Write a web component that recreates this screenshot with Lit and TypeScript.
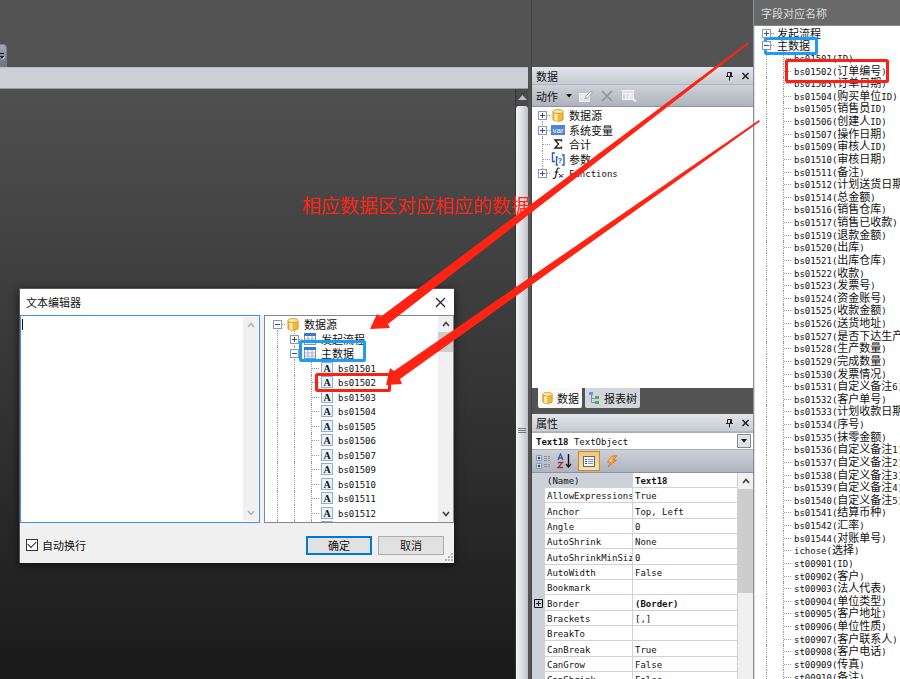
import { LitElement, html, svg, css } from "lit";
import { customElement, property } from "lit/decorators.js";

type Cell = "line" | "tee" | "plus" | "minus" | "pluslast" | "minusfirst" | "plusfirst";
type IconName = "db" | "var" | "sum" | "param" | "fx" | "table" | "field";
interface TreeRow {
  cells: Cell[];
  icon?: IconName;
  text: string;
}

const dbShape = svg`
  <path d="M2 3.500v8c0 2.200 10 2.200 10 0v-8z" fill="#f6b92c" stroke="#d0962a"/>
  <path d="M3.500 4.500v7.500c1 .8 2 .9 3 1V5z" fill="#fff1b8"/>
  <ellipse cx="7" cy="3.500" rx="5" ry="2" fill="#fde9a5" stroke="#d9a238"/>`;

const icons: Record<IconName, unknown> = {
  db: dbShape,
  var: svg`<rect x="0" y="2" width="14" height="10" fill="#4d86d3"/>
    <text x="7" y="10" text-anchor="middle" font-family="Liberation Sans" font-size="8" fill="#fff">var</text>`,
  sum: svg`<path d="M10.500 4.500V3H4L7.500 7L4 11H10.500V9.500" fill="none" stroke="#222" stroke-width="1.400"/>`,
  param: svg`<path d="M4 1H1.500V9.500H4M7 5H5.500V13H7M11 3H13V13H11" fill="none" stroke="#2b5fb5" stroke-width="1.400"/>
    <text x="9" y="11" text-anchor="middle" font-family="Liberation Sans" font-weight="bold" font-size="8" fill="#2b5fb5">?</text>`,
  fx: svg`<path d="M8.500 2.500C6.500 1 6 3 5.600 5.500L4.800 10C4.500 12.500 3 13 2 12M3.500 6H7.500" fill="none" stroke="#222" stroke-width="1.200"/>
    <path d="M8 8.500C10 7.500 9.500 12 12 11M12.500 8.500C11 8 10 11.500 8 11" fill="none" stroke="#222"/>`,
  table: svg`<rect x="1.500" y="1.500" width="11" height="11" fill="#fff" stroke="#7d95b5"/>
    <rect x="1" y="1" width="12" height="3" fill="#3c78c8"/>
    <path d="M5 4V12M9 4V12M2 7H12M2 10H12" stroke="#9fb0c8"/>`,
  field: svg`<rect x="1.500" y="1.500" width="11" height="11" fill="#eaf2fb" stroke="#8fafd4"/>
    <text x="7" y="11" text-anchor="middle" font-family="Liberation Serif" font-weight="bold" font-size="10" fill="#111">A</text>`,
};

/** Wraps runs of Latin text so that they keep half the width of a Han character. */
const mixed = (text: string) =>
  text.split(/([\x20-\x7e]+)/).filter(Boolean).map((part) =>
    /^[\x20-\x7e]/.test(part) ? html`<span class="latin">${part}</span>` : part);

const chevron = (down: boolean) => html`<svg class="chevron" width="8" height="6" viewBox="0 0 8 6">
  <path d=${down ? "M1 1L4 4.500L7 1" : "M1 5L4 1.500L7 5"} fill="none" stroke="currentColor" stroke-width="1.700"/></svg>`;

const shared = css`
  * { box-sizing: border-box; }
  .latin { font-family: "DejaVu Sans Mono", monospace; font-size: 9px; white-space: pre; }
  .chevron { display: block; }
`;

@customElement("tree-view")
export class TreeView extends LitElement {
  @property({ attribute: false }) rows: TreeRow[] = [];
  @property({ reflect: true }) density = "normal";

  static styles = [shared, css`
    :host { display: block; overflow: hidden; }
    ul { list-style: none; margin: 0; padding: 0 0 0 4px; }
    li { display: flex; align-items: center; height: 14px; white-space: nowrap; }
    li:nth-child(even) { height: 15px; }
    :host([density="compact"]) li { height: 13px; }
    :host([density="compact"]) li:nth-child(8n + 2),
    :host([density="compact"]) li:nth-child(8n + 5),
    :host([density="compact"]) li:nth-child(8n + 7) { height: 12px; }
    .cell { flex: none; position: relative; width: 17px; height: 100%; }
    .cell::before { content: ""; position: absolute; left: 8px; top: 0; bottom: 0; border-left: 1px dotted #999; }
    .cell::after { content: ""; position: absolute; left: 9px; right: 1px; top: 50%; border-top: 1px dotted #999; }
    .line::after { display: none; }
    .pluslast::before { bottom: 50%; }
    .minusfirst::before, .plusfirst::before { top: 50%; }
    .box { position: absolute; z-index: 1; left: 4px; top: calc(50% - 4px); width: 9px; height: 9px; display: block; }
    .icon { flex: none; width: 14px; height: 14px; margin: 0 2px 0 0; }
    .label { padding-left: 2px; line-height: 12px; }
  `];

  render() {
    return html`<ul>${this.rows.map((row) => html`<li>
      ${row.cells.map((c) => html`<span class="cell ${c}">${/plus|minus/.test(c)
        ? html`<svg class="box" viewBox="0 0 9 9"><rect x=".5" y=".5" width="8" height="8" fill="#fff" stroke="#8e99a8"/>
            <path d=${c.startsWith("plus") ? "M2 4.500H7M4.500 2V7" : "M2 4.500H7"} stroke="#2c4fa0"/></svg>`
        : ""}</span>`)}
      ${row.icon ? html`<svg class="icon" viewBox="0 0 14 14">${icons[row.icon]}</svg>` : ""}
      <span class="label">${mixed(row.text)}</span></li>`)}</ul>`;
  }
}

const dataRows: TreeRow[] = [
  { cells: ["plusfirst"], icon: "db", text: "数据源" },
  { cells: ["plus"], icon: "var", text: "系统变量" },
  { cells: ["tee"], icon: "sum", text: "合计" },
  { cells: ["tee"], icon: "param", text: "参数" },
  { cells: ["pluslast"], icon: "fx", text: "Functions" },
];

const editorRows: TreeRow[] = [
  { cells: ["minusfirst"], icon: "db", text: "数据源" },
  { cells: ["line", "plus"], icon: "table", text: "发起流程" },
  { cells: ["line", "minus"], icon: "table", text: "主数据" },
  ...["01", "02", "03", "04", "05", "06", "07", "09", "10", "11", "12"].map(
    (n): TreeRow => ({ cells: ["line", "line", "tee"], icon: "field", text: `bs015${n}` })),
  { cells: ["line", "line", "tee"], icon: "field", text: "" },
];

const fields = `bs01501(ID)
bs01502(订单编号)
bs01503(订单日期)
bs01504(购买单位ID)
bs01505(销售员ID)
bs01506(创建人ID)
bs01507(操作日期)
bs01509(审核人ID)
bs01510(审核日期)
bs01511(备注)
bs01512(计划送货日期)
bs01514(总金额)
bs01516(销售仓库)
bs01517(销售已收款)
bs01519(退款金额)
bs01520(出库)
bs01521(出库仓库)
bs01522(收款)
bs01523(发票号)
bs01524(资金账号)
bs01525(收款金额)
bs01526(送货地址)
bs01527(是否下达生产)
bs01528(生产数量)
bs01529(完成数量)
bs01530(发票情况)
bs01531(自定义备注6)
bs01532(客户单号)
bs01533(计划收款日期)
bs01534(序号)
bs01535(抹零金额)
bs01536(自定义备注1)
bs01537(自定义备注2)
bs01538(自定义备注3)
bs01539(自定义备注4)
bs01540(自定义备注5)
bs01541(结算币种)
bs01542(汇率)
bs01544(对账单号)
ichose(选择)
st00901(ID)
st00902(客户)
st00903(法人代表)
st00904(单位类型)
st00905(客户地址)
st00906(单位性质)
st00907(客户联系人)
st00908(客户电话)
st00909(传真)
st00910(备注)`.split("\n");

const fieldRows: TreeRow[] = [
  { cells: ["plusfirst"], text: "发起流程" },
  { cells: ["minus"], text: "主数据" },
  ...fields.map((text): TreeRow => ({ cells: ["line", "tee"], text })),
];

const properties: [string, string][] = [
  ["(Name)", "Text18"], ["AllowExpressions", "True"], ["Anchor", "Top, Left"], ["Angle", "0"],
  ["AutoShrink", "None"], ["AutoShrinkMinSize", "0"], ["AutoWidth", "False"], ["Bookmark", ""],
  ["Border", "(Border)"], ["Brackets", "[,]"], ["BreakTo", ""], ["CanBreak", "True"],
  ["CanGrow", "False"], ["CanShrink", "False"],
];

const panelTitle = (title: string) => html`<header class="panel-title"><h2>${title}</h2>
  <button class="bare" aria-label="固定"><svg width="9" height="10" viewBox="0 0 9 10"><path d="M2.500 5.500V1.500H6.500V5.500M1 5.500H8M4.500 6V9.500M5.500 1.500V5.500" fill="none" stroke="#222"/></svg></button>
  <button class="bare" aria-label="关闭"><svg width="9" height="8" viewBox="0 0 9 8"><path d="M1.500 1L7.500 7M7.500 1L1.500 7" stroke="#222" stroke-width="1.500"/></svg></button></header>`;

@customElement("app-root")
export class AppRoot extends LitElement {
  static styles = [shared, css`
    :host {
      display: grid; grid-template-columns: minmax(0, 1fr) 223px 146px; grid-template-rows: 100%;
      position: relative; height: 100vh; overflow: hidden; background: #535353; color: #111;
      font: 11px/14px "Noto Sans CJK SC", sans-serif;
    }
    h1, h2 { margin: 0; font-size: 11px; font-weight: 400; }
    button { font: inherit; color: inherit; padding: 0; margin: 0; border: 0; }
    .bare { background: none; display: flex; align-items: center; justify-content: center; }

    .workspace { display: flex; flex-direction: column; min-width: 0; padding-right: 3px; }
    .top { height: 67px; display: flex; align-items: flex-end; }
    .stub { width: 7px; height: 23px; border: 1px solid #777b84; border-left: 0; border-radius: 0 4px 0 0; background: linear-gradient(#a5a9b3, #6b7280); display: flex; align-items: center; }
    .band { height: 22px; background: #cdcfd4; border-top: 1px solid #bbb; border-bottom: 1px solid #999; }
    .canvas { flex: 1; display: flex; justify-content: flex-end; background: linear-gradient(#505050, #1a1a1a); }
    .vscroll { width: 13px; display: flex; flex-direction: column; background: #4a4a4a; border-left: 1px solid #333; }
    .vscroll .up { height: 17px; color: #bbb; }
    .vthumb { flex: 1; padding-top: 76px; background: linear-gradient(90deg, #f4f5f8, #d8dade 60%, #bfc1c6); border-radius: 3px 3px 0 0; display: flex; align-items: center; justify-content: center; }

    .side { display: flex; flex-direction: column; padding-top: 67px; border-left: 1px solid #444; border-right: 1px solid #8b909b; min-height: 0; }
    .panel { display: flex; flex-direction: column; min-height: 0; background: #fff; }
    .data { flex: 321 0 0; }
    .props { flex: 265 0 0; overflow: hidden; }
    .panel-title { flex: none; height: 18px; display: flex; align-items: center; gap: 7px; padding: 0 3px 0 4px; background: linear-gradient(#e2e5ea, #c6cad2); border-bottom: 1px solid #b1b5be; }
    .panel-title h2 { flex: 1; }
    .tools { flex: none; height: 22px; display: flex; align-items: center; padding: 0 4px; background: linear-gradient(#cdd1d8, #aeb3bd); border-bottom: 1px solid #8d929c; }
    .data .tools { gap: 7px; }
    .data .tools .menu { gap: 8px; }
    .data tree-view { flex: 1; margin-left: -2px; padding-top: 1px; }
    .tabs { flex: none; height: 26px; display: flex; align-items: flex-start; gap: 3px; padding: 0 6px; background: #535353; }
    .tabs button { height: 20px; display: flex; align-items: center; gap: 3px; padding: 0 3px; background: #d3d6dc; border-radius: 0 0 2px 2px; }
    .tabs .active { background: #fafafa; }

    .picker { flex: none; position: relative; height: 18px; display: flex; align-items: center; background: #fff; border: 1px solid #a9aeb8; border-width: 1px 0; }
    .picker select { position: absolute; inset: 0; width: 100%; opacity: 0; }
    .picker .value { flex: 1; padding-left: 4px; line-height: 14px; }
    .picker .drop { width: 14px; height: 14px; margin-right: 2px; display: flex; align-items: center; justify-content: center; border: 1px solid #858a94; background: #e3e3e5; }
    .props .tools { gap: 6px; height: 23px; }
    .props .tools .on { width: 22px; height: 20px; border: 1px solid #c28b3c; background: linear-gradient(#f8c477, #ffe29a); }
    .sheet { flex: 1; min-height: 0; display: flex; overflow: hidden; align-items: flex-start; }
    table { flex: 1; table-layout: fixed; width: 0; border-collapse: separate; border-spacing: 0; }
    col.gutter { width: 13px; }
    col.name { width: 88px; }
    tr { height: 15px; }
    tr:nth-child(3n) { height: 16px; }
    td, th { padding: 0 0 0 2px; font-weight: 400; text-align: left; line-height: 12px; border-bottom: 1px solid #cfd1d6; border-right: 1px solid #cfd1d6; overflow: hidden; white-space: nowrap; }
    td.gutter { background: #cdd1d9; border: 0; padding: 0 0 0 2px; }
    td.gutter svg { display: block; }
    tr:first-child th { background: #cdd1d9; }
    .bold .latin { font-weight: 700; }

    .rail { flex: none; display: flex; flex-direction: column; align-items: center; width: 15px; background: #f0f0f0; color: #444; }
    .rail .step { flex: none; height: 16px; display: flex; align-items: center; }
    .rail .thumb { width: 100%; background: #cdcdcd; }
    .props .rail { align-self: stretch; }
    .props .rail .thumb { flex: none; height: 104px; }

    .fields { display: flex; flex-direction: column; min-width: 0; background: #fff; border-left: 1px solid #ddd; }
    .fields h2 { flex: none; height: 26px; margin-left: -1px; padding: 0 0 0 7px; line-height: 26px; color: #ddd; background: #696969; border-bottom: 1px solid #888; }
    .fields tree-view { flex: 1; margin-left: -1px; }

    .dialog { position: absolute; left: 19px; top: 288px; width: 435px; display: flex; flex-direction: column; background: #f0f0f0; border: 1px solid #555; border-width: 1px 0 0 1px; box-shadow: 0 2px 8px #000a; }
    .caption { height: 26px; display: flex; align-items: center; justify-content: space-between; padding: 0 8px 0 6px; background: #fff; }
    .panes { display: flex; gap: 4px; height: 208px; }
    .editor { flex: 1; display: flex; border: 1px solid #3f93dc; background: #fff; min-width: 0; }
    .editor textarea { flex: 1; min-width: 0; resize: none; border: 0; outline: 0; padding: 1px; background: #fff; font: inherit; }
    .editor .rail { color: #b5b5b5; margin: 1px; justify-content: space-between; }
    .caret { width: 1px; height: 11px; margin: 3px 0 0 1px; background: #111; }
    .source { width: 190px; display: flex; border: 1px solid #828790; background: #fff; }
    .source tree-view { flex: 1; padding-top: 1px; }
    .source .rail .thumb { height: 20px; }
    .source .rail .space { flex: 1; }
    .footer { height: 40px; display: flex; align-items: center; gap: 6px; padding: 4px 10px 0 6px; }
    .wrap { flex: 1; display: flex; align-items: center; gap: 4px; }
    .wrap input { appearance: none; width: 12px; height: 12px; margin: 0; border: 1px solid #333; background: #fff; display: grid; place-items: center; }
    .wrap input:checked::before { content: ""; width: 7px; height: 4px; border: solid #222; border-width: 0 0 1px 1px; transform: rotate(-45deg); margin-bottom: 3px; }
    .footer button { width: 66px; height: 19px; background: #e1e1e1; border: 1px solid #adadad; }
    .footer .ok { border: 2px solid #0078d7; }
    .grip { position: absolute; right: 1px; bottom: 1px; }

    .marks { position: absolute; left: 0; top: 0; pointer-events: none; }
    .note { position: absolute; left: 302px; top: 193px; margin: 0; color: #ff2314; font-size: 19px; line-height: 24px; font-weight: 400; white-space: nowrap; }
  `];

  render() {
    return html`
      <main class="workspace">
        <div class="top"><div class="stub"><svg width="5" height="8" viewBox="0 0 5 8"><path d="M0 1.500H4" stroke="#111"/><path d="M0 4H4.500L2 7z" fill="#111"/><path d="M2 7.500L5 4.500" stroke="#fff"/></svg></div></div>
        <div class="band"></div>
        <div class="canvas">
          <div class="vscroll">
            <button class="bare up" aria-label="向上滚动"><svg width="9" height="5" viewBox="0 0 9 5"><path d="M0 5L4.500 0L9 5z" fill="#bbb"/></svg></button>
            <div class="vthumb"><svg width="8" height="8" viewBox="0 0 8 8"><path d="M0 1.500H8M0 3.500H8M0 5.500H8" stroke="#777"/></svg></div>
          </div>
        </div>
      </main>

      <aside class="side">
        <section class="panel data">
          ${panelTitle("数据")}
          <div class="tools">
            <button class="bare menu">动作<svg width="6" height="4" viewBox="0 0 6 4"><path d="M0 0H6L3 3.500z" fill="#111"/></svg></button>
            <button class="bare" aria-label="编辑"><svg width="14" height="12" viewBox="0 0 14 12"><path d="M.5 3.500H10.500V11.500H.5zM.5 6.500H10M4 4V11M7 4V11" fill="#dfe1e5" stroke="#f3f3f4"/><path d="M6 8L12 2" stroke="#eee" stroke-width="3"/><path d="M6 9L7 6L12 1L13.500 3L8.500 8z" fill="none" stroke="#a4a8b0"/></svg></button>
            <button class="bare" aria-label="删除"><svg width="14" height="12" viewBox="0 0 14 12"><path d="M2 1L12 11M12 1L2 11" stroke="#8d9199" stroke-width="1.500"/></svg></button>
            <button class="bare" aria-label="查看"><svg width="16" height="13" viewBox="0 0 16 13"><path d="M1.500 1.500H12.500V10.500H1.500zM1.500 4.500H12M5 2V10M9 2V10" fill="#d9dce1" stroke="#f5f5f6"/><circle cx="10" cy="8" r="2.500" fill="#e6e7ea" stroke="#f5f5f6"/><path d="M12 10L15 12.500" stroke="#f0f0f0" stroke-width="2"/></svg></button>
          </div>
          <tree-view .rows=${dataRows}></tree-view>
        </section>
        <nav class="tabs">
          <button class="active"><svg width="13" height="14" viewBox="0 0 14 15">${dbShape}</svg>数据</button>
          <button><svg width="13" height="14" viewBox="0 0 13 14"><path d="M3.500 4V11.500H7M3.500 7.500H7" fill="none" stroke="#889" /><rect x="1" y="1" width="4" height="3" fill="#5b9be6"/><rect x="7" y="5" width="4" height="3" fill="#46b35a"/><rect x="7" y="10" width="4" height="3" fill="#46b35a"/></svg>报表树</button>
        </nav>
        <section class="panel props">
          ${panelTitle("属性")}
          <div class="picker">
            <span class="value"><b class="latin">Text18</b><span class="latin"> TextObject</span></span>
            <span class="drop"><svg width="6" height="4" viewBox="0 0 6 4"><path d="M0 0H6L3 3.500z" fill="#111"/></svg></span>
            <select aria-label="对象"><option>Text18 TextObject</option></select>
          </div>
          <div class="tools">
            <button class="bare" aria-label="分类"><svg width="15" height="15" viewBox="0 0 15 15"><path d="M.5 1.500H5.500V6.500H.5zM.5 9.500H5.500V14.500H.5z" fill="#fff" stroke="#6c9cd4"/><path d="M1.500 4H4.500M3 2.500V5.500M1.500 12H4.500M3 10.500V13.500" stroke="#111"/><path d="M8 2.500H11M8 4.500H11M8 6.500H11M8 10.500H11M8 12.500H11M12 2.500H14M12 4.500H14M12 6.500H14M12 10.500H14M12 12.500H14" stroke="#8a8f98"/></svg></button>
            <button class="bare" aria-label="字母排序"><svg width="15" height="16" viewBox="0 0 15 16"><path d="M1 7L3.500 1L6 7M2 5H5" fill="none" stroke="#2c5cab" stroke-width="1.300"/><path d="M1 9.500H5.500L1 14.500H6" fill="none" stroke="#a03038" stroke-width="1.300"/><path d="M11.500 1V13M9 11L11.500 14L14 11" fill="none" stroke="#111" stroke-width="1.400"/></svg></button>
            <button class="bare on" aria-label="属性"><svg width="12" height="11" viewBox="0 0 12 11"><rect x=".5" y=".5" width="11" height="10" fill="#f5f8fc" stroke="#4a6a9c"/><path d="M2 3.500H4M2 5.500H4M2 7.500H4" stroke="#2c5cab"/><path d="M5 3.500H10M5 5.500H10M5 7.500H10" stroke="#8896aa"/></svg></button>
            <button class="bare" aria-label="事件"><svg width="12" height="13" viewBox="0 0 12 13"><path d="M6 1L11 .5L7.500 5H10.500L2 12L4.500 7H1.500z" fill="#f5a13a" stroke="#d06f25" stroke-width=".7"/><path d="M6.500 2L3.500 6H6" fill="none" stroke="#ffe0a0"/></svg></button>
          </div>
          <div class="sheet">
            <table>
              <colgroup><col class="gutter"><col class="name"><col></colgroup>
              <tbody>${properties.map(([name, value]) => html`<tr>
                <td class="gutter">${name === "Border" ? html`<svg width="9" height="9" viewBox="0 0 9 9"><path d="M.5 .5H8.500V8.500H.5zM2 4.500H7M4.500 2V7" fill="none" stroke="#111"/></svg>` : ""}</td>
                <th scope="row">${mixed(name)}</th>
                <td class=${name === "(Name)" || name === "Border" ? "bold" : ""}>${mixed(value)}</td></tr>`)}</tbody>
            </table>
            <div class="rail"><span class="step">${chevron(false)}</span><div class="thumb"></div></div>
          </div>
        </section>
      </aside>

      <section class="fields">
        <h2>字段对应名称</h2>
        <tree-view density="compact" .rows=${fieldRows}></tree-view>
      </section>

      <section class="dialog" role="dialog" aria-labelledby="caption">
        <header class="caption"><h1 id="caption">文本编辑器</h1>
          <button class="bare" aria-label="关闭"><svg width="11" height="11" viewBox="0 0 11 11"><path d="M1 1L10 10M10 1L1 10" stroke="#222" stroke-width="1.200"/></svg></button></header>
        <div class="panes">
          <div class="editor"><span class="caret"></span><textarea aria-label="文本"></textarea>
            <div class="rail"><span class="step">${chevron(false)}</span><span class="step">${chevron(true)}</span></div></div>
          <div class="source"><tree-view .rows=${editorRows}></tree-view>
            <div class="rail"><span class="step">${chevron(false)}</span><div class="thumb"></div><div class="space"></div><span class="step">${chevron(true)}</span></div></div>
        </div>
        <footer class="footer">
          <label class="wrap"><input type="checkbox" checked>自动换行</label>
          <button class="ok">确定</button><button>取消</button>
        </footer>
        <svg class="grip" width="9" height="9" viewBox="0 0 9 9"><path d="M7 1h2M4 4h2M7 4h2M1 7h2M4 7h2M7 7h2" stroke="#b5b5b5" stroke-width="2"/></svg>
      </section>

      <p class="note">相应数据区对应相应的数据</p>
      <svg class="marks" width="900" height="679" viewBox="0 0 900 679">
        <g fill="#ff2314">
          <path d="M748 42L749 43.500L388 324L390 328L370 329L377 314L381 316.500z"/>
          <path d="M759 120L760 121.500L400 379L402 384L386 385L390 368L394 371z"/>
        </g>
        <g fill="none" stroke-width="3">
          <rect x="765.500" y="38.500" width="51" height="15" rx="1" stroke="#1b9cf5"/>
          <rect x="786.500" y="60.500" width="101" height="21" rx="1" stroke="#ff1e14"/>
          <rect x="300.500" y="341.500" width="64" height="19" rx="1" stroke="#1b9cf5"/>
          <rect x="316.500" y="374.500" width="73" height="16" rx="1" stroke="#ff1e14"/>
        </g>
      </svg>`;
  }
}
